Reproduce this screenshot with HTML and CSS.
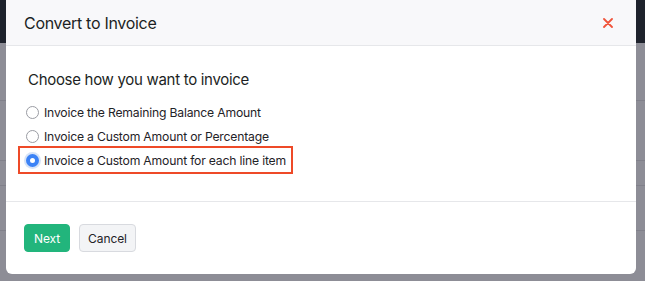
FILE: index.html
```html
<!DOCTYPE html>
<html>
<head>
<meta charset="utf-8">
<link rel="stylesheet" href="styles.css">
</head>
<body>
<div class="page">
  <div class="topbar"></div>
  <div class="rows">
    <div class="row r1"></div>
    <div class="row r2"></div>
    <div class="row r3"></div>
    <div class="row r4"></div>
  </div>
</div>
<div class="modal">
  <div class="modal-header">
    <h2 class="title">Convert to Invoice</h2>
    <button class="close" aria-label="Close">
      <svg width="10" height="10" viewBox="0 0 10 10"><path d="M1 1L9 9M9 1L1 9" stroke="#f0533a" stroke-width="1.8" stroke-linecap="round"/></svg>
    </button>
  </div>
  <div class="modal-body">
    <p class="question">Choose how you want to invoice</p>
    <label class="option"><span class="radio"></span><span>Invoice the Remaining Balance Amount</span></label>
    <label class="option"><span class="radio"></span><span>Invoice a Custom Amount or Percentage</span></label>
    <label class="option selected"><span class="radio checked"></span><span>Invoice a Custom Amount for each line item</span></label>
  </div>
  <div class="modal-footer">
    <button class="btn btn-primary">Next</button>
    <button class="btn btn-secondary">Cancel</button>
  </div>
</div>
</body>
</html>
```
FILE: styles.css
```css
* { box-sizing: border-box; }
html, body { margin: 0; padding: 0; }
body {
  width: 645px;
  height: 281px;
  overflow: hidden;
  background: #8d8d96;
  font-family: Inter, "Noto Sans", sans-serif;
  color: #1f2328;
  position: relative;
}
.page { height: 281px; }
.topbar { height: 43px; background: #1e222c; }
.rows { display: flex; flex-direction: column; }
.row { border-bottom: 1px solid #80808a; }
.r1 { height: 58px; }
.r2 { height: 60px; }
.r3 { height: 25px; }
.r4 { height: 45px; }

.modal {
  position: absolute;
  left: 6px;
  top: -6px;
  width: 630px;
  height: 280px;
  background: #fff;
  border-radius: 6px;
  display: flex;
  flex-direction: column;
  overflow: hidden;
}
.modal-header {
  height: 52px;
  padding: 6px 18px 0 18px;
  background: #f8f8fa;
  border-bottom: 1px solid #e6e7ea;
  display: flex;
  align-items: center;
  justify-content: space-between;
}
.title {
  margin: 0;
  font-size: 16px;
  letter-spacing: -0.3px;
  font-weight: 400;
  color: #1c1f24;
}
.close {
  border: 0;
  background: transparent;
  padding: 0;
  width: 20px;
  height: 20px;
  display: flex;
  align-items: center;
  justify-content: center;
}
.modal-body {
  padding: 24px 22px 0 12px;
  height: 156px;
  border-bottom: 1px solid #e6e7ea;
}
.question {
  margin: 0 0 10px 10px;
  font-size: 15px;
  letter-spacing: -0.3px;
  color: #1c1f24;
  line-height: 20px;
}
.option {
  display: flex;
  align-items: center;
  gap: 5px;
  height: 24px;
  width: 275px;
  white-space: nowrap;
  font-size: 12.2px;
  letter-spacing: -0.2px;
  color: #1f2328;
  padding-left: 6px;
  border: 2px solid transparent;
}
.option.selected {
  border-color: #ee4a28;
  height: 28px;
  margin-top: -2px;
}
.radio {
  width: 13px;
  height: 13px;
  border-radius: 50%;
  border: 1px solid #9a9ca3;
  background: #fff;
  flex: none;
}
.radio.checked {
  border: 4px solid #3b82f6;
  box-shadow: 0 0 0 2px #d6e3f7;
}
.modal-footer {
  display: flex;
  gap: 9px;
  padding: 22px 18px;
}
.btn {
  height: 28px;
  border-radius: 4px;
  font-family: Inter, "Noto Sans", sans-serif;
  font-size: 12px;
  letter-spacing: -0.1px;
  padding: 0;
  cursor: pointer;
}
.btn-primary {
  background: #22b57c;
  color: #fff;
  border: 1px solid #22b57c;
  width: 46px;
}
.btn-secondary {
  background: #f3f4f6;
  color: #1f2328;
  border: 1px solid #d8dadf;
  width: 57px;
}
```
